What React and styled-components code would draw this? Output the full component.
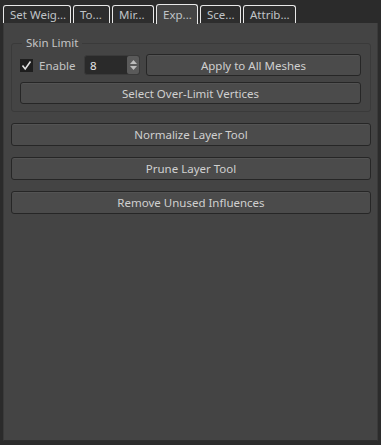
import styled, { createGlobalStyle } from "styled-components";

const Global = createGlobalStyle`
  html, body {
    margin: 0;
    padding: 0;
    background: #444444;
  }
  body {
    font-family: "Noto Sans", "Open Sans", "Noto Sans CJK KR", sans-serif;
    font-size: 11.5px;
    color: #d2d2d2;
  }
`;

const Window = styled.div`
  width: 381px;
  height: 445px;
  display: flex;
  flex-direction: column;
  background: #2b2b2b;
`;

const TabBar = styled.div`
  height: 23px;
  display: flex;
  align-items: flex-end;
  padding-left: 3px;
  gap: 2px;
  background: #2b2b2b;
`;

const Tab = styled.div`
  width: ${(p) => p.w}px;
  height: ${(p) => (p.active ? 20 : 18)}px;
  box-sizing: border-box;
  padding-left: 6px;
  display: flex;
  align-items: center;
  border: 1px solid #e8e8e8;
  border-bottom: none;
  border-radius: 3px 3px 0 0;
  background: ${(p) => (p.active ? "#444444" : "#2d2d2d")};
  color: #c0c4c8;
  font-size: 11.5px;
  white-space: nowrap;
  margin-bottom: ${(p) => (p.active ? "-1px" : "0")};
  position: relative;
  z-index: ${(p) => (p.active ? 1 : 0)};
`;

const Panel = styled.div`
  flex: 1;
  margin: 0 3px 4px 3px;
  background: #444444;
  border-left: 1px solid #3a3a3a;
  border-right: 1px solid #3a3a3a;
  border-bottom: 1px solid #2e2e2e;
  padding: 12px 6px 0 7px;
  display: flex;
  flex-direction: column;
  gap: 11px;
`;

const Group = styled.fieldset`
  margin: 0;
  padding: 3px 9px 7px 8px;
  border: 1px solid #3a3a3a;
  border-radius: 3px;
  display: flex;
  flex-direction: column;
  gap: 6px;

  legend {
    padding: 0 4px;
    margin-left: 2px;
    line-height: 16px;
    color: #c4c4c4;
  }
`;

const Row = styled.div`
  display: flex;
  align-items: center;
  gap: 6px;
`;

const Check = styled.label`
  display: flex;
  align-items: center;
  gap: 6px;
  width: 58px;
  color: #c4c4c4;
`;

const Box = styled.span`
  width: 13px;
  height: 13px;
  background: #1e1e1e;
  display: flex;
  align-items: center;
  justify-content: center;
`;

const Spin = styled.div`
  width: 56px;
  height: 20px;
  box-sizing: border-box;
  border: 1px solid #3a3a3a;
  border-radius: 3px;
  background: #2a2a2a;
  display: flex;
  align-items: center;
  justify-content: space-between;
  padding-left: 5px;
  color: #e6e6e6;
`;

const Arrows = styled.span`
  width: 12px;
  height: 18px;
  background: #5a5a5a;
  border-radius: 2px;
  display: flex;
  flex-direction: column;
  align-items: center;
  justify-content: center;
  gap: 2px;
`;

const Button = styled.div`
  flex: ${(p) => (p.grow ? 1 : "none")};
  height: ${(p) => p.h || 22}px;
  box-sizing: border-box;
  border: 1px solid #262626;
  border-radius: 3px;
  background: #4b4b4b;
  box-shadow: inset 0 1px 0 #535353;
  display: flex;
  align-items: center;
  justify-content: center;
  color: #d0d0d0;
`;

const tabs = [
  ["Set Weig...", 68],
  ["To...", 37],
  ["Mir...", 42],
  ["Exp...", 42],
  ["Sce...", 41],
  ["Attrib...", 53],
];

export default function App() {
  return (
    <>
      <Global />
      <Window>
        <TabBar>
          {tabs.map(([t, w]) => (
            <Tab key={t} w={w} active={t === "Exp..."}>
              {t}
            </Tab>
          ))}
        </TabBar>
        <Panel>
          <Group>
            <legend>Skin Limit</legend>
            <Row>
              <Check>
                <Box>
                  <svg width="11" height="11" viewBox="0 0 11 11">
                    <path d="M1.5 5.5 L4.2 9 L9.5 1.5" stroke="#e0e0e0" strokeWidth="1.6" fill="none" />
                  </svg>
                </Box>
                Enable
              </Check>
              <Spin>
                8
                <Arrows>
                  <svg width="7" height="4" viewBox="0 0 7 4">
                    <path d="M0 4 L3.5 0 L7 4 Z" fill="#bdbdbd" />
                  </svg>
                  <svg width="7" height="4" viewBox="0 0 7 4">
                    <path d="M0 0 L3.5 4 L7 0 Z" fill="#bdbdbd" />
                  </svg>
                </Arrows>
              </Spin>
              <Button grow h={22}>Apply to All Meshes</Button>
            </Row>
            <Button h={22}>Select Over-Limit Vertices</Button>
          </Group>
          <Button h={23}>Normalize Layer Tool</Button>
          <Button h={23}>Prune Layer Tool</Button>
          <Button h={23}>Remove Unused Influences</Button>
        </Panel>
      </Window>
    </>
  );
}
